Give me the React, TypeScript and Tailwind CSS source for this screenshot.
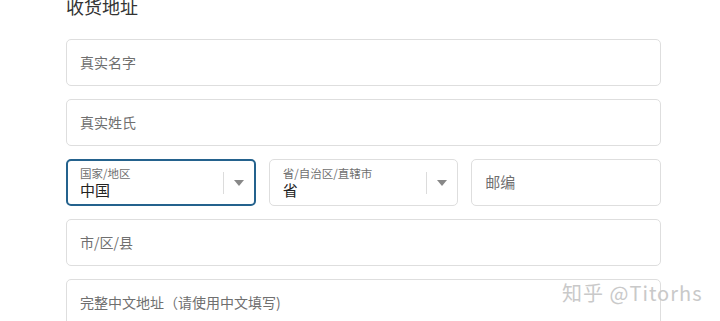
const font = { fontFamily: '"Noto Sans CJK SC", "Noto Sans", sans-serif' };

function TextField({ placeholder, size = "text-[14px]" }: { placeholder: string; size?: string }) {
  return (
    <div className="h-[47px] rounded-[5px] border border-[#dedede] bg-white flex items-center px-[13px]">
      <span className={`${size} text-[#6f6f6f]`}>{placeholder}</span>
    </div>
  );
}

function SelectField({ label, value, focused }: { label: string; value: string; focused?: boolean }) {
  return (
    <div
      className={`h-[47px] rounded-[5px] bg-white flex items-center ${
        focused ? "border-2 border-[#24628d] pl-[12px]" : "border border-[#dedede] pl-[13px]"
      }`}
    >
      <div className="flex-1 flex flex-col leading-none">
        <span className="text-[11.5px] text-[#6f6f6f] leading-[14px]">{label}</span>
        <span className="text-[15px] text-[#222] leading-[19px]">{value}</span>
      </div>
      <div className="w-px h-[22px] bg-[#dcdcdc]" />
      <div className="w-[30px] flex justify-center">
        <svg width="10" height="6" viewBox="0 0 10 6">
          <path d="M0 0 L10 0 L5 6 Z" fill="#888" />
        </svg>
      </div>
    </div>
  );
}

export default function App() {
  return (
    <div className="relative w-[720px] h-[321px] overflow-hidden bg-white" style={font}>
      <div className="pl-[66px]">
        <h2 className="-mt-[6px] mb-[21px] text-[18px] leading-[24px] text-[#333] font-normal">收货地址</h2>
        <div className="w-[595px] flex flex-col gap-[13px]">
          <TextField placeholder="真实名字" />
          <TextField placeholder="真实姓氏" />
          <div className="grid grid-cols-3 gap-[13px]">
            <SelectField label="国家/地区" value="中国" focused />
            <SelectField label="省/自治区/直辖市" value="省" />
            <TextField placeholder="邮编" size="text-[15px]" />
          </div>
          <TextField placeholder="市/区/县" />
          <TextField placeholder="完整中文地址（请使用中文填写)" />
        </div>
      </div>
      <div className="absolute left-[562px] top-[278px] text-[20px] text-[#c9c9c9] tracking-[1px]">
        知乎 @Titorhs
      </div>
    </div>
  );
}
